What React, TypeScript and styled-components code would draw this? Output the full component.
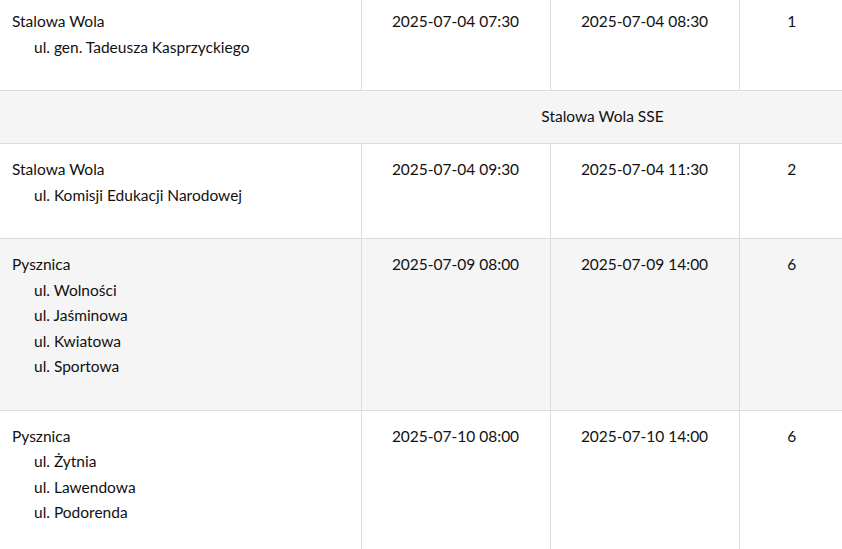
import * as React from 'react';
import styled, { createGlobalStyle } from "styled-components";

const Global = createGlobalStyle`
    html, body { margin: 0; padding: 0; background: #fff; }
    body { font-family: Lato, "Noto Sans", sans-serif; color: #111; overflow: hidden; }
`;

type Stop = {
    town: string,
    streets: string[],
    from: string,
    to: string,
    count: number,
    shaded?: boolean,
};

const Wrap = styled.div`
    margin-top: -4px;
    width: 844px;
`;

const Table = styled.table`
    width: 844px;
    border-collapse: collapse;
    table-layout: fixed;
    font-size: 15.5px;
`;

const Row = styled.tr<{ $shaded?: boolean }>`
    background: ${p => p.$shaded ? "#f5f5f5" : "#fff"};
    border-bottom: 1px solid #dcdcdc;
`;

const Cell = styled.td`
    vertical-align: top;
    padding: 13px 12px 30px;
    line-height: 25.5px;
    text-align: center;
    border-left: 1px solid #dcdcdc;
    &:first-child { border-left: none; text-align: left; }
`;

const GroupCell = styled.td`
    height: 50px;
    padding: 0 0 2px;
    text-align: center;
    vertical-align: middle;
`;

const Street = styled.div`
    padding-left: 22px;
`;

const firstStops: Stop[] = [
    { town: "Stalowa Wola", streets: ["ul. gen. Tadeusza Kasprzyckiego"], from: "2025-07-04 07:30", to: "2025-07-04 08:30", count: 1 },
];

const groupStops: Stop[] = [
    { town: "Stalowa Wola", streets: ["ul. Komisji Edukacji Narodowej"], from: "2025-07-04 09:30", to: "2025-07-04 11:30", count: 2 },
    { town: "Pysznica", streets: ["ul. Wolności", "ul. Jaśminowa", "ul. Kwiatowa", "ul. Sportowa"], from: "2025-07-09 08:00", to: "2025-07-09 14:00", count: 6, shaded: true },
    { town: "Pysznica", streets: ["ul. Żytnia", "ul. Lawendowa", "ul. Podorenda"], from: "2025-07-10 08:00", to: "2025-07-10 14:00", count: 6 },
];

const StopRow: React.FC<{ stop: Stop }> = ({ stop }) => (
    <Row $shaded={stop.shaded}>
        <Cell>
            <div>{stop.town}</div>
            {stop.streets.map((s, i) => <Street key={i}>{s}</Street>)}
        </Cell>
        <Cell>{stop.from}</Cell>
        <Cell>{stop.to}</Cell>
        <Cell>{stop.count}</Cell>
    </Row>
);

const App: React.FC = () => (
    <Wrap>
        <Global />
        <Table>
            <colgroup>
                <col style={{ width: 361 }} />
                <col style={{ width: 189 }} />
                <col style={{ width: 189 }} />
                <col />
            </colgroup>
            <tbody>
                {firstStops.map((s, i) => <StopRow key={i} stop={s} />)}
                <Row $shaded>
                    <GroupCell />
                    <GroupCell colSpan={3}>Stalowa Wola SSE</GroupCell>
                </Row>
                {groupStops.map((s, i) => <StopRow key={i} stop={s} />)}
            </tbody>
        </Table>
    </Wrap>
);

export default App;
